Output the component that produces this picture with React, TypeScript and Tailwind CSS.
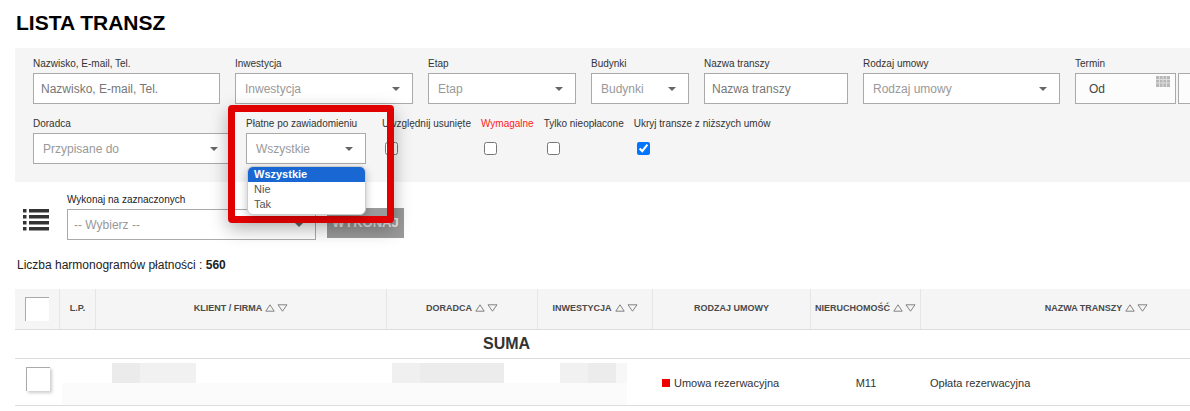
import React from "react";

function Caret() {
  return (
    <svg width="8" height="4" viewBox="0 0 8 4" className="ml-auto mr-[12px] shrink-0">
      <path d="M0 0h8L4 4z" fill="#666" />
    </svg>
  );
}

function SortArrows() {
  return (
    <svg width="23" height="8" viewBox="0 0 23 8" className="mb-[3px] ml-[3px] shrink-0">
      <path d="M0.8 7.2L5 0.8L9.2 7.2Z" fill="none" stroke="#777" strokeWidth="0.9" />
      <path d="M13 0.8H22L17.5 7.2Z" fill="none" stroke="#777" strokeWidth="0.9" />
    </svg>
  );
}

function ListIcon() {
  return (
    <svg width="27" height="22" viewBox="0 0 27 22" className="mt-[15px] shrink-0">
      {[0, 6, 12, 18].map((y) => (
        <g key={y} fill="#333">
          <rect x="1" y={y} width="3.5" height="3.5" />
          <rect x="7" y={y} width="20" height="3.5" />
        </g>
      ))}
    </svg>
  );
}

function CalendarIcon() {
  return (
    <svg width="14" height="11" viewBox="0 0 14 11" className="absolute right-[5px] top-[2px]">
      <rect width="14" height="11" fill="#b8b8b8" />
      <g stroke="#e6e6e6" strokeWidth="0.8">
        <path d="M3.5 0v11M7 0v11M10.5 0v11M0 3.5h14M0 7h14" />
      </g>
    </svg>
  );
}

function Label({ children, red }: { children: React.ReactNode; red?: boolean }) {
  return (
    <div className={red ? "mb-[3px] whitespace-nowrap text-[10px] leading-[12px] text-[#ff1a1a]" : "mb-[3px] whitespace-nowrap text-[10px] leading-[12px] text-[#333]"}>
      {children}
    </div>
  );
}

function TextBox({ label, placeholder, className }: { label: string; placeholder: string; className: string }) {
  return (
    <div className={className}>
      <Label>{label}</Label>
      <div className="flex h-[31px] items-center border border-[#aaa] bg-white pl-[7px] text-[12px] text-[#777]">
        {placeholder}
      </div>
    </div>
  );
}

function SelectBox({ label, placeholder, className }: { label: string; placeholder: string; className: string }) {
  return (
    <div className={className}>
      <Label>{label}</Label>
      <div className="flex h-[31px] items-center border border-[#aaa] bg-white pl-[9px] text-[12px] text-[#999]">
        <span className="whitespace-nowrap">{placeholder}</span>
        <Caret />
      </div>
    </div>
  );
}

function CheckField({ label, checked, red }: { label: string; checked?: boolean; red?: boolean }) {
  return (
    <div className="flex flex-col items-start">
      <Label red={red}>{label}</Label>
      <input type="checkbox" checked={!!checked} readOnly className="ml-[3px] mt-[9px] h-[13px] w-[13px]" />
    </div>
  );
}

function HeadCell({ label, className, sort }: { label: string; className: string; sort?: boolean }) {
  return (
    <div className={"flex h-full shrink-0 items-center justify-center border-r border-[#e6e6e6] " + className}>
      <span className="whitespace-nowrap text-[9px] font-bold uppercase text-[#4a4a4a]">{label}</span>
      {sort && <SortArrows />}
    </div>
  );
}

export default function App() {
  return (
    <div className="relative h-[411px] w-[1190px] overflow-hidden bg-white font-['Liberation_Sans',Arial,sans-serif] text-[#333]">
      <h1 className="pl-4 pt-[11px] text-[21px] font-bold leading-[24px] text-black">LISTA TRANSZ</h1>

      {/* Filters */}
      <div className="ml-[15px] mt-[13px] w-[1300px] bg-[#f5f5f5] pb-[18px] pl-[18px] pt-[10px]">
        <div className="flex gap-[15px]">
          <TextBox label="Nazwisko, E-mail, Tel." placeholder="Nazwisko, E-mail, Tel." className="w-[187px]" />
          <SelectBox label="Inwestycja" placeholder="Inwestycja" className="w-[178px]" />
          <SelectBox label="Etap" placeholder="Etap" className="w-[148px]" />
          <SelectBox label="Budynki" placeholder="Budynki" className="w-[98px]" />
          <TextBox label="Nazwa transzy" placeholder="Nazwa transzy" className="w-[144px]" />
          <SelectBox label="Rodzaj umowy" placeholder="Rodzaj umowy" className="w-[197px]" />
          <div className="flex flex-col">
            <Label>Termin</Label>
            <div className="flex gap-[2px]">
              <div className="relative flex h-[31px] w-[101px] items-center border border-[#aaa] bg-[#fcfcfc] pl-[13px] text-[12px] text-[#444]">
                Od
                <CalendarIcon />
              </div>
              <div className="h-[31px] w-[101px] border border-[#aaa] bg-[#fcfcfc]" />
            </div>
          </div>
        </div>

        <div className="mt-[14px] flex gap-[15px]">
          <SelectBox label="Doradca" placeholder="Przypisane do" className="w-[198px]" />
          <SelectBox label="Płatne po zawiadomieniu" placeholder="Wszystkie" className="w-[120px]" />
          <div className="ml-[1px] flex gap-[10px]">
            <CheckField label="Uwzględnij usunięte" />
            <CheckField label="Wymagalne" red />
            <CheckField label="Tylko nieopłacone" />
            <CheckField label="Ukryj transze z niższych umów" checked />
          </div>
        </div>
      </div>

      {/* Bulk action */}
      <div className="mt-[12px] flex items-start pl-[22px]">
        <ListIcon />
        <div className="ml-[18px] w-[249px]">
          <div className="mb-[3px] text-[10px] leading-[12px] text-[#222]">Wykonaj na zaznaczonych</div>
          <div className="flex h-[31px] items-center border border-[#aaa] bg-white pl-[6px] text-[12px] text-[#999]">
            -- Wybierz --
            <Caret />
          </div>
        </div>
        <button className="ml-[11px] mt-[14px] h-[30px] w-[77px] bg-[#9a9a9a] text-[13px] font-bold text-[#e8e8e8]">
          WYKONAJ
        </button>
      </div>

      <div className="mt-[18px] pl-[17px] text-[12px] leading-[14px] text-[#222]">
        Liczba harmonogramów płatności : <span className="font-bold">560</span>
      </div>

      {/* Table */}
      <div className="ml-[15px] mt-[17px] w-[1300px]">
        <div className="flex h-[41px] items-center border-b border-[#ddd] bg-[#f5f5f5]">
          <div className="flex h-full w-[45px] shrink-0 items-center justify-center border-r border-[#e6e6e6]">
            <div className="h-[24px] w-[24px] border-l border-t border-[#aaa] bg-white" />
          </div>
          <HeadCell label="L.P." className="w-[36px]" />
          <HeadCell label="Klient / Firma" className="w-[291px]" sort />
          <HeadCell label="Doradca" className="w-[151px]" sort />
          <HeadCell label="Inwestycja" className="w-[115px]" sort />
          <HeadCell label="Rodzaj umowy" className="w-[158px]" />
          <HeadCell label="Nieruchomość" className="w-[110px]" sort />
          <HeadCell label="Nazwa transzy" className="w-[352px]" sort />
        </div>

        <div className="flex h-[29px] items-center border-b border-[#ddd] pl-[468px]">
          <span className="text-[16px] font-bold text-[#333]">SUMA</span>
        </div>

        <div className="flex h-[47px] border-b border-[#ddd]">
          <div className="flex w-[45px] shrink-0 justify-center pt-[8px]">
            <div className="h-[24px] w-[24px] border-l border-t border-[#aaa] bg-white shadow-[2px_2px_3px_rgba(0,0,0,0.2)]" />
          </div>
          <div className="flex w-[593px] shrink-0 flex-col">
            <div className="flex h-[24px] items-end">
              <div className="ml-[52px] flex h-[20px] w-[84px]">
                <div className="w-[28px] bg-[#ebebeb]" />
                <div className="flex-1 bg-[#f1f1f1]" />
              </div>
              <div className="ml-[196px] flex h-[20px] w-[112px]">
                <div className="w-[28px] bg-[#f0f0f0]" />
                <div className="flex-1 bg-[#ececec]" />
              </div>
              <div className="ml-[56px] flex h-[20px] w-[67px]">
                <div className="w-[28px] bg-[#f1f1f1]" />
                <div className="w-[28px] bg-[#ececec]" />
                <div className="flex-1 bg-[#f7f7f7]" />
              </div>
            </div>
            <div className="ml-[2px] h-[22px] w-[565px] bg-[#fbfbfb]" />
          </div>
          <div className="flex w-[158px] shrink-0 items-center pl-[9px] pt-[2px] text-[11px] text-[#333]">
            <span className="mr-[4px] h-[8px] w-[8px] bg-[#ee0000]" />
            Umowa rezerwacyjna
          </div>
          <div className="flex w-[110px] shrink-0 items-center justify-center pt-[2px] text-[11px] text-[#333]">M11</div>
          <div className="flex w-[352px] shrink-0 items-center pl-[9px] pt-[2px] text-[11px] text-[#333]">
            Opłata rezerwacyjna
          </div>
        </div>
      </div>

      {/* Highlight annotation with open select list */}
      <div className="absolute left-[228px] top-[105px] h-[118px] w-[166px] rounded-[4px] border-[7px] border-[#e10000] shadow-[0_6px_18px_rgba(0,0,0,0.3)]" />
      <div className="absolute left-[247px] top-[166px] w-[119px] overflow-hidden rounded-[6px] border border-[#ccc] bg-white pb-[2px] text-[11px] leading-[15px] shadow-[0_3px_8px_rgba(0,0,0,0.25)]">
        <div className="bg-[#1967d2] pl-[6px] font-bold text-white">Wszystkie</div>
        <div className="pl-[6px] text-[#555]">Nie</div>
        <div className="pl-[6px] text-[#555]">Tak</div>
      </div>
    </div>
  );
}
